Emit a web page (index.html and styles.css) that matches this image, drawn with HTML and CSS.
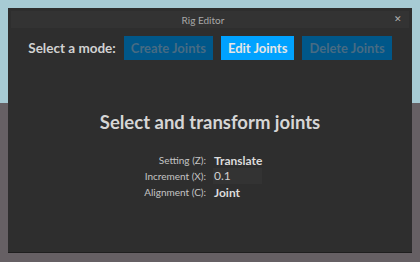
FILE: index.html
```html
<!DOCTYPE html>
<html lang="en">
<head>
    <meta charset="UTF-8">
    <title>Rig Editor</title>
    <link rel="stylesheet" href="styles.css">
</head>
<body>
    <div class="window">
        <div class="titlebar">
            <span class="title">Rig Editor</span>
            <span class="close">&#x2715;</span>
        </div>
        <div class="modes">
            <span class="modes-label">Select a mode:</span>
            <button class="mode">Create Joints</button>
            <button class="mode active">Edit Joints</button>
            <button class="mode">Delete Joints</button>
        </div>
        <h1 class="heading">Select and transform joints</h1>
        <div class="settings">
            <span class="key">Setting (Z):</span>
            <span class="val">Translate</span>
            <span class="key">Increment (X):</span>
            <span class="val"><span class="field">0.1</span></span>
            <span class="key">Alignment (C):</span>
            <span class="val">Joint</span>
        </div>
    </div>
</body>
</html>
```

FILE: styles.css
```css
html, body {
    margin: 0;
    height: 262px;
    overflow: hidden;
}
body {
    background: linear-gradient(#a7cbd4 0, #a7cbd4 103px, #666064 103px);
    font-family: "Lato", "Open Sans", sans-serif;
    padding: 8px;
    box-sizing: border-box;
}
.window {
    height: 245px;
    background-color: #2e2e2e;
    border-bottom: 1px solid #1f1f1f;
    padding: 3px 3px 0;
    box-sizing: border-box;
}
.titlebar {
    position: relative;
    height: 17px;
    background-color: #333333;
    display: flex;
    align-items: center;
    justify-content: center;
    padding-right: 14px;
}
.title {
    font-size: 10px;
    color: #a8a8a8;
}
.close {
    position: absolute;
    right: 7px;
    top: 2px;
    font-size: 9px;
    color: #b0b0b0;
}
.modes {
    display: flex;
    justify-content: center;
    align-items: center;
    gap: 8px;
    margin-top: 8px;
    height: 24px;
}
.modes-label {
    font-size: 13.5px;
    font-weight: bold;
    color: #d2d2d2;
}
.mode {
    height: 24px;
    border: none;
    padding: 0 7px;
    font-family: inherit;
    font-size: 13px;
    font-weight: bold;
    background-color: #005789;
    color: #476b83;
}
.mode.active {
    background-color: #00a2ff;
    color: #e6e6e6;
}
.heading {
    margin: 50px 0 0;
    text-align: center;
    font-size: 18.5px;
    font-weight: bold;
    color: #d6d6d6;
    line-height: 24px;
}
.settings {
    display: grid;
    grid-template-columns: 1fr 1fr;
    column-gap: 8px;
    grid-auto-rows: 16px;
    margin-top: 18px;
    align-items: center;
}
.key {
    text-align: right;
    font-size: 10px;
    color: #c4c4c4;
}
.val {
    font-size: 12px;
    font-weight: bold;
    color: #dcdcdc;
}
.field {
    display: inline-block;
    width: 48px;
    height: 16px;
    line-height: 16px;
    background-color: #333333;
    font-weight: normal;
    color: #d0d0d0;
    margin-left: -1px;
    padding-left: 1px;
}
```
